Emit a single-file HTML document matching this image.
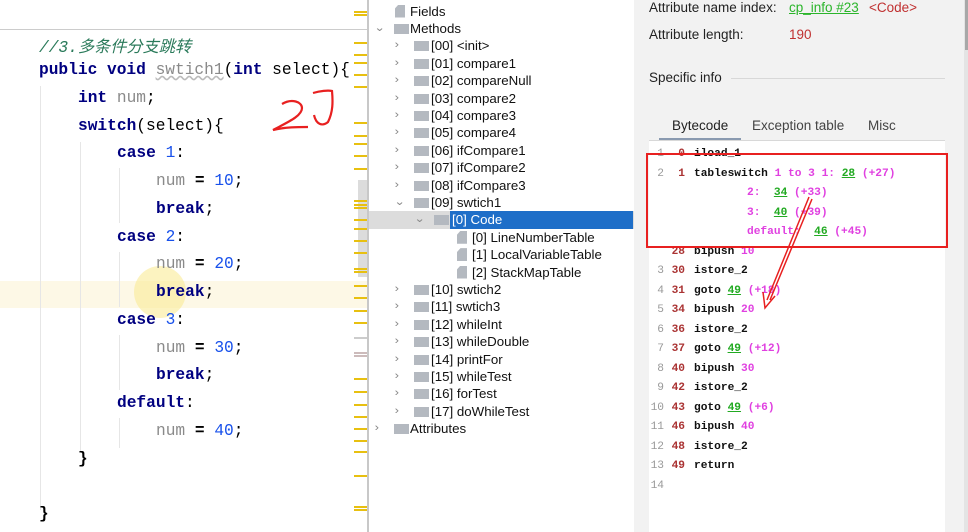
<!DOCTYPE html>
<html><head><meta charset="utf-8"><style>
*{margin:0;padding:0;box-sizing:border-box}
body{width:968px;height:532px;overflow:hidden;background:#fff;position:relative;font-family:"Liberation Sans","Noto Sans CJK SC",sans-serif}
.a{position:absolute;white-space:pre}
.code{font-family:"Liberation Mono","Noto Sans CJK SC",monospace;font-size:16.2px;color:#000}
.kw{color:#000080;font-weight:bold}
.n{color:#1750eb}
.v{color:#8a8a8a}
.tr{font-size:13.3px;color:#111;height:17.4px;line-height:17.4px}
.ar{position:absolute;font-size:11px;color:#888;transform:scaleX(1.2)}
.fo{position:absolute;width:15px;height:10px;background:#b4b9c0;top:4px}
.fi{position:absolute;width:10px;height:13px;background:#b4b9c0;top:2px;clip-path:polygon(35% 0,100% 0,100% 100%,0 100%,0 30%)}
.bc{font-family:"Liberation Mono","Noto Serif CJK SC",monospace;font-size:11.2px;font-weight:bold;line-height:19.5px;height:19.5px}
.row{position:absolute;left:645px;width:300px;height:19.5px}
.row .ln{position:absolute;left:0;width:19px;text-align:right;color:#999;font-weight:normal}
.row .of{position:absolute;left:20px;width:20px;text-align:right;color:#a33}
.row .ins{position:absolute;left:49px}
.in{color:#111}
.m{color:#e040e0}
.g{color:#22aa22;text-decoration:underline}
.mk{position:absolute;left:354px;width:13px;height:2px;background:#e8c010}
</style></head><body>
<div class="a" style="left:0;top:29px;width:368px;height:1px;background:#ccc"></div>
<div class="a" style="left:0;top:281px;width:368px;height:27px;background:#fdf8e6"></div>
<div class="a" style="left:134px;top:266px;width:52px;height:52px;border-radius:50%;background:rgba(250,235,150,.6)"></div>
<div class="a" style="left:40px;top:86px;width:1px;height:155px;background:#e6e6e6"></div>
<div class="a" style="left:40px;top:240px;width:1px;height:270px;background:#e6e6e6"></div>
<div class="a" style="left:80px;top:142px;width:1px;height:310px;background:#e6e6e6"></div>
<div class="a" style="left:119px;top:168px;width:1px;height:55px;background:#e6e6e6"></div>
<div class="a" style="left:119px;top:252px;width:1px;height:55px;background:#e6e6e6"></div>
<div class="a" style="left:119px;top:335px;width:1px;height:55px;background:#e6e6e6"></div>
<div class="a" style="left:119px;top:418px;width:1px;height:30px;background:#e6e6e6"></div>
<div class="a code" style="left:39px;top:33px;color:#2a7a5a;font-style:italic">//3.多条件分支跳转</div>
<div class="a code" style="left:39px;top:61px"><span class="kw">public void</span> <span class="v" style="text-decoration:underline wavy #bbb">swtich1</span>(<span class="kw">int</span> select){</div>
<div class="a code" style="left:78px;top:89px"><span class="kw">int</span> <span class="v">num</span>;</div>
<div class="a code" style="left:78px;top:117px"><span class="kw">switch</span>(select){</div>
<div class="a code" style="left:117px;top:144px"><span class="kw">case</span> <span class="n">1</span>:</div>
<div class="a code" style="left:156px;top:172px"><span class="v">num</span> <b>=</b> <span class="n">10</span>;</div>
<div class="a code" style="left:156px;top:200px"><span class="kw">break</span>;</div>
<div class="a code" style="left:117px;top:228px"><span class="kw">case</span> <span class="n">2</span>:</div>
<div class="a code" style="left:156px;top:255px"><span class="v">num</span> <b>=</b> <span class="n">20</span>;</div>
<div class="a code" style="left:156px;top:283px"><span class="kw">break</span>;</div>
<div class="a code" style="left:117px;top:311px"><span class="kw">case</span> <span class="n">3</span>:</div>
<div class="a code" style="left:156px;top:339px"><span class="v">num</span> <b>=</b> <span class="n">30</span>;</div>
<div class="a code" style="left:156px;top:366px"><span class="kw">break</span>;</div>
<div class="a code" style="left:117px;top:394px"><span class="kw">default</span>:</div>
<div class="a code" style="left:156px;top:422px"><span class="v">num</span> <b>=</b> <span class="n">40</span>;</div>
<div class="a code" style="left:78px;top:450px"><b>}</b></div>
<div class="a code" style="left:39px;top:505px"><b>}</b></div>
<svg class="a" style="left:0;top:0" width="368" height="532"><path d="M282 104 C292 98 302 102 302 108 C302 116 288 122 273 130 C285 127 298 127 308 127 M313 93 C320 91 328 90 332 91 C333 102 333 112 328 122 C322 127 316 124 314 115" fill="none" stroke="#e82020" stroke-width="2.2"/></svg>
<div class="a" style="left:358px;top:180px;width:9px;height:97px;background:#dcdcdc"></div>
<div class="mk" style="top:11px"></div><div class="mk" style="top:14px"></div><div class="mk" style="top:42px"></div><div class="mk" style="top:54px"></div><div class="mk" style="top:62px"></div><div class="mk" style="top:74px"></div><div class="mk" style="top:86px"></div><div class="mk" style="top:122px"></div><div class="mk" style="top:135px"></div><div class="mk" style="top:143px"></div><div class="mk" style="top:155px"></div><div class="mk" style="top:168px"></div><div class="mk" style="top:200px"></div><div class="mk" style="top:204px"></div><div class="mk" style="top:207px"></div><div class="mk" style="top:219px"></div><div class="mk" style="top:228px"></div><div class="mk" style="top:240px"></div><div class="mk" style="top:252px"></div><div class="mk" style="top:268px"></div><div class="mk" style="top:271px"></div><div class="mk" style="top:285px"></div><div class="mk" style="top:297px"></div><div class="mk" style="top:310px"></div><div class="mk" style="top:322px"></div><div class="mk" style="top:337px;background:#ccc"></div><div class="mk" style="top:352px;background:#cbb"></div><div class="mk" style="top:355px;background:#cbb"></div><div class="mk" style="top:378px"></div><div class="mk" style="top:391px"></div><div class="mk" style="top:404px"></div><div class="mk" style="top:416px"></div><div class="mk" style="top:428px"></div><div class="mk" style="top:440px"></div><div class="mk" style="top:451px"></div><div class="mk" style="top:475px"></div><div class="mk" style="top:506px"></div><div class="mk" style="top:509px"></div>
<div class="a" style="left:367px;top:0;width:2px;height:532px;background:#c8c8c8"></div>
<div class="a" style="left:369px;top:0;width:265px;height:532px;background:#fff"></div>
<div class="a" style="left:634px;top:0;width:8px;height:532px;background:#f2f2f2"></div>
<div class="a" style="left:369px;top:211px;width:265px;height:18px;background:#dcdcdc"></div>
<div class="a" style="left:450px;top:211px;width:183px;height:18px;background:#1e6ec8"></div>
<div class="a" style="left:642px;top:0;width:326px;height:532px;background:#f2f2f2"></div>
<div class="a" style="left:649px;top:0;font-size:13.5px;color:#222">Attribute name index:</div>
<div class="a" style="left:789px;top:0;font-size:13.5px;color:#2bb52b;text-decoration:underline">cp_info #23</div>
<div class="a" style="left:869px;top:0;font-size:13.5px;color:#c03030">&lt;Code&gt;</div>
<div class="a" style="left:649px;top:27px;font-size:13.5px;color:#222">Attribute length:</div>
<div class="a" style="left:789px;top:27px;font-size:13.5px;color:#c03030">190</div>
<div class="a" style="left:649px;top:70px;font-size:13.5px;color:#222">Specific info</div>
<div class="a" style="left:731px;top:78px;width:214px;height:1px;background:#d8d8d8"></div>
<div class="a" style="left:672px;top:118px;font-size:13.5px;color:#222">Bytecode</div>
<div class="a" style="left:752px;top:118px;font-size:13.5px;color:#444">Exception table</div>
<div class="a" style="left:868px;top:118px;font-size:13.5px;color:#444">Misc</div>
<div class="a" style="left:659px;top:138px;width:82px;height:2px;background:#8a9ab0"></div>
<div class="a" style="left:649px;top:140px;width:296px;height:1px;background:#d8d8d8"></div>
<div class="a" style="left:649px;top:141px;width:296px;height:391px;background:#fff"></div>
<div class="a" style="left:964px;top:0;width:4px;height:532px;background:#e4e4e4"></div>
<div class="a" style="left:965px;top:0;width:3px;height:50px;background:#a8a8a8"></div>
<div class="row bc" style="top:145px"><span class="ln">1</span><span class="of">0</span><span class="ins in">iload_1</span></div>
<div class="row bc" style="top:164.5px"><span class="ln">2</span><span class="of">1</span><span class="ins"><span class="in">tableswitch</span> <span class="m">1 to 3  1:  </span><span class="g">28</span> <span class="m">(+27)</span></span></div>
<div class="a bc" style="left:747px;top:184px"><span class="m">2:  </span><span class="g">34</span> <span class="m">(+33)</span></div>
<div class="a bc" style="left:747px;top:203.5px"><span class="m">3:  </span><span class="g">40</span> <span class="m">(+39)</span></div>
<div class="a bc" style="left:747px;top:223px"><span class="m">default:  </span><span class="g">46</span> <span class="m">(+45)</span></div>
<div class="row bc" style="top:242.5px"><span class="of">28</span><span class="ins"><span class="in">bipush</span> <span class="m">10</span></span></div>
<div class="row bc" style="top:262px"><span class="ln">3</span><span class="of">30</span><span class="ins in">istore_2</span></div>
<div class="row bc" style="top:281.5px"><span class="ln">4</span><span class="of">31</span><span class="ins"><span class="in">goto</span> <span class="g">49</span> <span class="m">(+18)</span></span></div>
<div class="row bc" style="top:301px"><span class="ln">5</span><span class="of">34</span><span class="ins"><span class="in">bipush</span> <span class="m">20</span></span></div>
<div class="row bc" style="top:320.5px"><span class="ln">6</span><span class="of">36</span><span class="ins in">istore_2</span></div>
<div class="row bc" style="top:340px"><span class="ln">7</span><span class="of">37</span><span class="ins"><span class="in">goto</span> <span class="g">49</span> <span class="m">(+12)</span></span></div>
<div class="row bc" style="top:359.5px"><span class="ln">8</span><span class="of">40</span><span class="ins"><span class="in">bipush</span> <span class="m">30</span></span></div>
<div class="row bc" style="top:379px"><span class="ln">9</span><span class="of">42</span><span class="ins in">istore_2</span></div>
<div class="row bc" style="top:398.5px"><span class="ln">10</span><span class="of">43</span><span class="ins"><span class="in">goto</span> <span class="g">49</span> <span class="m">(+6)</span></span></div>
<div class="row bc" style="top:418px"><span class="ln">11</span><span class="of">46</span><span class="ins"><span class="in">bipush</span> <span class="m">40</span></span></div>
<div class="row bc" style="top:437.5px"><span class="ln">12</span><span class="of">48</span><span class="ins in">istore_2</span></div>
<div class="row bc" style="top:457px"><span class="ln">13</span><span class="of">49</span><span class="ins in">return</span></div>
<div class="row bc" style="top:476.5px"><span class="ln">14</span></div>
<svg class="a" style="left:0;top:0" width="968" height="532"><rect x="647" y="154" width="300" height="93" fill="none" stroke="#e82020" stroke-width="2"/><path d="M809 197 L767 300 M812 199 L770 300 M763 292 L765 308 L775 296" fill="none" stroke="#e82020" stroke-width="1.5"/></svg>
<div class="a" style="left:369px;top:0;width:265px">
<div class="a tr" style="left:0;top:2.5px"><span class="fi" style="left:26px"></span><span class="a" style="left:41px">Fields</span></div>
<div class="a tr" style="left:0;top:19.9px"><span class="ar" style="left:6px">⌄</span><span class="fo" style="left:25px"></span><span class="a" style="left:41px">Methods</span></div>
<div class="a tr" style="left:0;top:37.3px"><span class="ar" style="left:26px">›</span><span class="fo" style="left:45px"></span><span class="a" style="left:62px">[00] &lt;init&gt;</span></div>
<div class="a tr" style="left:0;top:54.7px"><span class="ar" style="left:26px">›</span><span class="fo" style="left:45px"></span><span class="a" style="left:62px">[01] compare1</span></div>
<div class="a tr" style="left:0;top:72.1px"><span class="ar" style="left:26px">›</span><span class="fo" style="left:45px"></span><span class="a" style="left:62px">[02] compareNull</span></div>
<div class="a tr" style="left:0;top:89.5px"><span class="ar" style="left:26px">›</span><span class="fo" style="left:45px"></span><span class="a" style="left:62px">[03] compare2</span></div>
<div class="a tr" style="left:0;top:106.9px"><span class="ar" style="left:26px">›</span><span class="fo" style="left:45px"></span><span class="a" style="left:62px">[04] compare3</span></div>
<div class="a tr" style="left:0;top:124.3px"><span class="ar" style="left:26px">›</span><span class="fo" style="left:45px"></span><span class="a" style="left:62px">[05] compare4</span></div>
<div class="a tr" style="left:0;top:141.7px"><span class="ar" style="left:26px">›</span><span class="fo" style="left:45px"></span><span class="a" style="left:62px">[06] ifCompare1</span></div>
<div class="a tr" style="left:0;top:159.1px"><span class="ar" style="left:26px">›</span><span class="fo" style="left:45px"></span><span class="a" style="left:62px">[07] ifCompare2</span></div>
<div class="a tr" style="left:0;top:176.5px"><span class="ar" style="left:26px">›</span><span class="fo" style="left:45px"></span><span class="a" style="left:62px">[08] ifCompare3</span></div>
<div class="a tr" style="left:0;top:193.9px"><span class="ar" style="left:26px">⌄</span><span class="fo" style="left:45px"></span><span class="a" style="left:62px">[09] swtich1</span></div>
<div class="a tr" style="left:0;top:211.3px"><span class="ar" style="left:46px">⌄</span><span class="fo" style="left:65px"></span><span class="a" style="left:83px;color:#fff">[0] Code</span></div>
<div class="a tr" style="left:0;top:228.7px"><span class="fi" style="left:88px"></span><span class="a" style="left:103px">[0] LineNumberTable</span></div>
<div class="a tr" style="left:0;top:246.1px"><span class="fi" style="left:88px"></span><span class="a" style="left:103px">[1] LocalVariableTable</span></div>
<div class="a tr" style="left:0;top:263.5px"><span class="fi" style="left:88px"></span><span class="a" style="left:103px">[2] StackMapTable</span></div>
<div class="a tr" style="left:0;top:280.9px"><span class="ar" style="left:26px">›</span><span class="fo" style="left:45px"></span><span class="a" style="left:62px">[10] swtich2</span></div>
<div class="a tr" style="left:0;top:298.3px"><span class="ar" style="left:26px">›</span><span class="fo" style="left:45px"></span><span class="a" style="left:62px">[11] swtich3</span></div>
<div class="a tr" style="left:0;top:315.7px"><span class="ar" style="left:26px">›</span><span class="fo" style="left:45px"></span><span class="a" style="left:62px">[12] whileInt</span></div>
<div class="a tr" style="left:0;top:333.1px"><span class="ar" style="left:26px">›</span><span class="fo" style="left:45px"></span><span class="a" style="left:62px">[13] whileDouble</span></div>
<div class="a tr" style="left:0;top:350.5px"><span class="ar" style="left:26px">›</span><span class="fo" style="left:45px"></span><span class="a" style="left:62px">[14] printFor</span></div>
<div class="a tr" style="left:0;top:367.9px"><span class="ar" style="left:26px">›</span><span class="fo" style="left:45px"></span><span class="a" style="left:62px">[15] whileTest</span></div>
<div class="a tr" style="left:0;top:385.3px"><span class="ar" style="left:26px">›</span><span class="fo" style="left:45px"></span><span class="a" style="left:62px">[16] forTest</span></div>
<div class="a tr" style="left:0;top:402.7px"><span class="ar" style="left:26px">›</span><span class="fo" style="left:45px"></span><span class="a" style="left:62px">[17] doWhileTest</span></div>
<div class="a tr" style="left:0;top:420.1px"><span class="ar" style="left:6px">›</span><span class="fo" style="left:25px"></span><span class="a" style="left:41px">Attributes</span></div>
</div>
</body></html>
